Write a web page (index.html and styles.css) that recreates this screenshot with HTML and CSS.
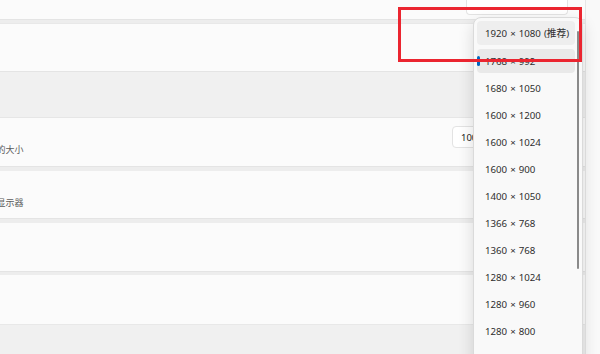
FILE: index.html
```html
<!DOCTYPE html>
<html lang="zh-CN">
<head>
    <meta charset="UTF-8">
    <meta name="viewport" content="width=device-width, initial-scale=1.0">
    <title>显示器设置</title>
    <link rel="stylesheet" href="styles.css">
</head>
<body>
    <div class="window">
        <main class="settings">
            <div class="card card-top">
                <div class="combo combo-top"></div>
            </div>
            <div class="card card-tall"></div>
            <div class="section"></div>
            <div class="card card-row">
                <span class="hint hint-scale">目的大小</span>
                <div class="combo combo-scale">100%</div>
            </div>
            <div class="card card-row card-d">
                <span class="hint hint-multi">多显示器</span>
            </div>
            <div class="card card-row card-e"></div>
            <div class="card card-row card-f"></div>
        </main>
        <aside class="edge"></aside>
    </div>

    <div class="flyout">
        <ul class="options">
            <li class="option hover">1920 × 1080 (推荐)</li>
            <li class="option selected">1768 × 992</li>
            <li class="option">1680 × 1050</li>
            <li class="option">1600 × 1200</li>
            <li class="option">1600 × 1024</li>
            <li class="option">1600 × 900</li>
            <li class="option">1400 × 1050</li>
            <li class="option">1366 × 768</li>
            <li class="option">1360 × 768</li>
            <li class="option">1280 × 1024</li>
            <li class="option">1280 × 960</li>
            <li class="option">1280 × 800</li>
        </ul>
        <div class="scroll-thumb"></div>
    </div>

    <div class="callout"></div>
</body>
</html>
```

FILE: styles.css
```css
* { box-sizing: border-box; }
body { margin: 0; width: 600px; height: 354px; overflow: hidden; background: #f0f0f0; font-family: "Noto Sans", "Noto Sans CJK SC", sans-serif; }

.window { display: flex; height: 354px; }
.settings { flex: 1; display: flex; flex-direction: column; background: #ededed; }
.edge { width: 15px; background: #f9f9f9; border-left: 1px solid #e6e6e6; }

.card { background: #fbfbfb; border-bottom: 1px solid #e4e4e4; display: flex; align-items: center; position: relative; }
.card-top { height: 20px; justify-content: flex-end; align-items: flex-start; padding-right: 17px; margin-bottom: 3px; }
.card-tall { height: 49px; border-top: 1px solid #e8e8e8; }
.section { height: 46px; background: #f0f0f0; border-bottom: 1px solid #e6e6e6; }
.card-row { height: 49px; margin-bottom: 4px; }
.card-d { height: 48px; }
.card-e { height: 49px; margin-bottom: 3px; }
.card-f { height: 50px; margin-bottom: 0; border-bottom-color: #e8e8e8; }
.settings::after { content: ""; flex: 1; background: #f0f0f0; }

.combo { background: #fff; border: 1px solid #e3e3e3; border-radius: 4px; font-size: 9.5px; color: #222; }
.combo-top { width: 102px; height: 15px; border-top: none; border-radius: 0 0 4px 4px; }
.combo-scale { margin-left: auto; margin-right: 13px; margin-top: -11px; width: 120px; height: 22px; padding: 4px 0 0 8px; }

.hint { font-family: "Noto Sans CJK SC", sans-serif; font-size: 9px; color: #5c5c5c; margin-top: 14px; white-space: nowrap; }
.hint-scale { margin-left: -12.5px; }
.hint-multi { margin-left: -12.5px; margin-top: 16px; }

.flyout { position: absolute; left: 473px; top: 17px; width: 110px; height: 350px; background: #f9f9f9; border: 1px solid #dadada; border-radius: 8px; box-shadow: 0 6px 16px rgba(0, 0, 0, 0.14); }
.options { list-style: none; margin: 0; padding: 3px 7px 0 3px; }
.option { height: 24px; margin-bottom: 3px; padding-left: 8px; border-radius: 4px; font-size: 9.7px; line-height: 25px; color: #2e2e2e; white-space: nowrap; position: relative; word-spacing: 0.5px; }
.option.hover { background: #eeeeee; }
.option.selected { background: #e9e9e9; margin-top: 4px; }
.option.selected::before { content: ""; position: absolute; left: 0; top: 7px; width: 3px; height: 10px; border-radius: 2px; background: #0067c0; }
.scroll-thumb { position: absolute; right: 3px; top: 13px; width: 2px; height: 238px; border-radius: 1px; background: #8a8a8a; }

.callout { position: absolute; left: 398px; top: 7px; width: 184px; height: 55px; border: 3.5px solid #eb2530; }
```
